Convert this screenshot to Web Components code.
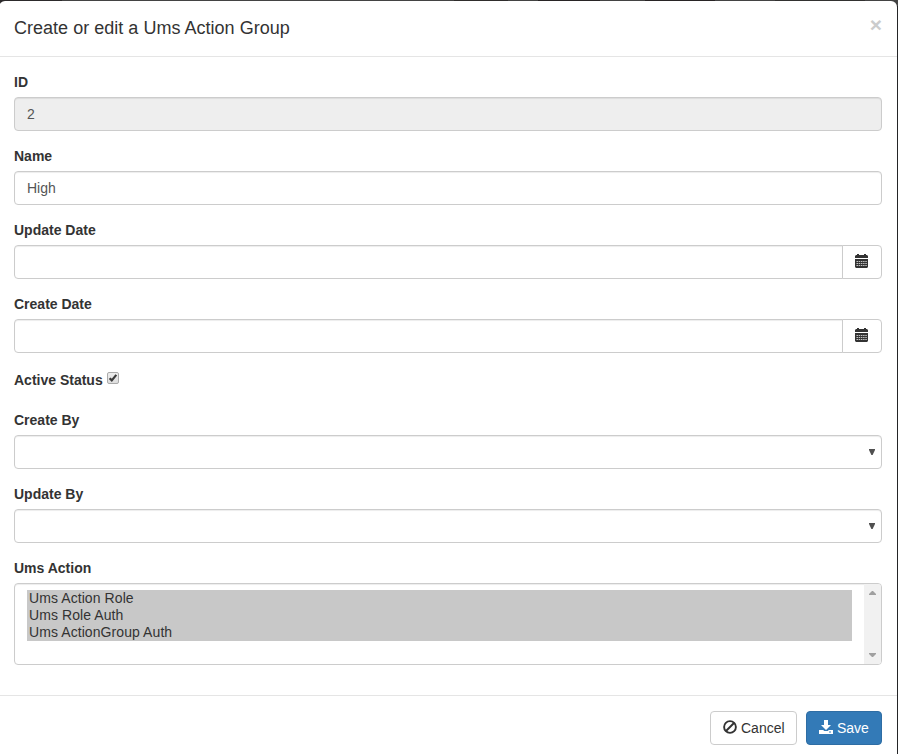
<!DOCTYPE html>
<html lang="en">
<head>
<meta charset="utf-8">
<title>Ums Action Group</title>
<style>
html,body{margin:0;height:100%;overflow:hidden}
body{background:#242527;font:14px/20px "Liberation Sans",Arial,sans-serif;color:#333}
</style>
</head>
<body>
<page-backdrop>
<modal-dialog>
  <span slot="title">Create or edit a Ums Action Group</span>
  <form-field label="ID"><text-box disabled>2</text-box></form-field>
  <form-field label="Name"><text-box>High</text-box></form-field>
  <form-field label="Update Date"><date-box></date-box></form-field>
  <form-field label="Create Date"><date-box></date-box></form-field>
  <check-field label="Active Status"></check-field>
  <form-field label="Create By"><select-box></select-box></form-field>
  <form-field label="Update By"><select-box></select-box></form-field>
  <form-field label="Ums Action">
    <multi-list><list-option>Ums Action Role</list-option><list-option>Ums Role Auth</list-option><list-option>Ums ActionGroup Auth</list-option></multi-list>
  </form-field>
  <action-button slot="footer" style="width:87px"><glyph-icon slot="icon" name="ban"></glyph-icon>Cancel</action-button>
  <action-button slot="footer" primary style="width:76px"><glyph-icon slot="icon" name="save"></glyph-icon>Save</action-button>
</modal-dialog>
</page-backdrop>
<script>
const define = (name, html) => customElements.define(name, class extends HTMLElement {
  constructor() {
    super();
    const t = document.createElement('template');
    t.innerHTML = '<style>*{box-sizing:border-box}:host{box-sizing:border-box}</style>' + (typeof html === 'function' ? html(this) : html);
    this.attachShadow({mode: 'open'}).append(t.content.cloneNode(true));
  }
});

define('page-backdrop', `<style>
:host{display:block;height:754px;padding:1px 1px 0 0;overflow:hidden;
background:linear-gradient(90deg,#2c2a2b 0 62px,#434343 62px 454px,#2f2d2c 454px 508px,#434343 508px 538px,#282425 538px 600px,#434343 600px 645px,#282425 645px 715px,#434343 715px 775px,#323130 775px 865px,#434343 865px) 0 0/100% 6px no-repeat,#242527}
</style><slot></slot>`);

define('modal-dialog', `<style>
:host{display:block;margin-left:-1px;height:760px;background:#fff;border-radius:6px 6px 0 0}
header{display:flex;justify-content:space-between;height:56px;padding:14px 15px 0;border-bottom:1px solid #e5e5e5}
h4{margin:0;font-size:18px;font-weight:400;line-height:26px;letter-spacing:.02px}
.close{font:bold 21px/21px "Liberation Sans",Arial,sans-serif;color:#ccc;margin-top:-1px}
main{padding:15px}
footer{display:flex;justify-content:flex-end;gap:9px;padding:15px;border-top:1px solid #e5e5e5}
</style>
<header><h4><slot name="title"></slot></h4><span class="close">×</span></header>
<main><slot></slot></main><footer><slot name="footer"></slot></footer>`);

define('form-field', el => `<style>
:host{display:block;margin-bottom:15px}
label{display:block;height:20px;margin-bottom:5px;font-weight:700}
</style><label>${el.getAttribute('label')}</label><slot></slot>`);

const box = 'border:1px solid #ccc;border-radius:4px;box-shadow:inset 0 1px 1px rgba(0,0,0,.075);background:#fff;';

define('text-box', `<style>
:host{display:block;height:34px;padding:6px 12px;color:#555;${box}}
:host([disabled]){background:#eee}
</style><slot></slot>`);

define('date-box', `<style>
:host{display:flex;height:34px}
.field{flex:1;${box}border-radius:4px 0 0 4px}
.pick{width:40px;margin-left:-1px;border:1px solid #ccc;border-radius:0 4px 4px 0;display:flex;padding:8px 0 0 12px;background:#fff}
</style><div class="field"></div><div class="pick"><glyph-icon name="calendar"></glyph-icon></div>`);

define('check-field', el => `<style>
:host{display:flex;height:27px;margin-bottom:15px;padding-top:2px}
label{font-weight:700;width:93px;white-space:nowrap}
svg{display:block;margin-top:2px}
</style><label>${el.getAttribute('label')}</label>
<svg width="12" height="12" viewBox="0 0 12 12"><defs><linearGradient id="g" x2="0" y2="1"><stop stop-color="#eee"/><stop offset="1" stop-color="#ddd"/></linearGradient></defs><rect x=".5" y=".5" width="11" height="11" rx="1.5" fill="url(#g)" stroke="#aaa"/><path d="M2.6 6.2 4.8 8.4 9.3 2.9" fill="none" stroke="#3b3b3b" stroke-width="2.2"/></svg>`);

define('select-box', `<style>
:host{display:flex;justify-content:flex-end;height:34px;padding:13px 6px 0;${box}}
svg{display:block}
</style><svg width="6" height="6" viewBox="0 0 6 6"><path d="M0 0H6V1L3.6 6H2.4L0 1Z" fill="#505050"/></svg>`);

define('multi-list', `<style>
:host{display:flex;justify-content:space-between;height:82px;overflow:hidden;${box}}
.items{flex:1;padding:6px 12px 0}
.bar{width:17px;background:#f1f1f1;display:flex;flex-direction:column;justify-content:space-between;align-items:center;padding:7px 0}
svg{display:block}
</style><div class="items"><slot></slot></div>
<div class="bar"><svg width="7" height="4" viewBox="0 0 7 4"><path d="M0 4V3L3 0H4L7 3V4Z" fill="#a0a0a0"/></svg><svg width="7" height="4" viewBox="0 0 7 4"><path d="M0 0V1L3 4H4L7 1V0Z" fill="#a0a0a0"/></svg></div>`);

define('list-option', `<style>:host{display:block;height:17px;line-height:17px;padding:0 2px;background:#c8c8c8;color:#333;letter-spacing:.08px}</style><slot></slot>`);

define('action-button', `<style>
:host{display:flex;height:34px;padding:6px 12px;gap:4px;border:1px solid #ccc;border-radius:4px;background:#fff;color:#333;white-space:nowrap}
:host([primary]){background:#337ab7;border-color:#2e6da4;color:#fff}
</style><slot name="icon"></slot><slot></slot>`);

const glyphs = {
  calendar: '<path d="M1 1H2V0H4V1H9V0H11V1H12L13 2V4H0V2ZM0 5H13V13L12 14H1L0 13Z" fill="currentColor"/><path d="M1.5 7.5H12M1.5 9.5H12M1.5 11.5H12" stroke="#fff" stroke-dasharray="1.5 .7" opacity=".7"/>',
  ban: '<circle cx="7" cy="7" r="5.9" fill="none" stroke="currentColor" stroke-width="1.9"/><path d="M3 11 11 3" stroke="currentColor" stroke-width="2"/>',
  save: '<path d="M5 0H9V5H12L7 10 2 5H5ZM0 10H4.2L5.2 11H8.8L9.8 10H14V14H0ZM10 11.5V12.5H12V11.5Z" fill="currentColor" fill-rule="evenodd"/>'
};
define('glyph-icon', el => `<style>:host{display:block;width:14px;height:14px;margin-top:2px;flex:none}:host([name=calendar]){margin-top:0}svg{display:block}</style>
<svg width="14" height="14" viewBox="0 0 14 14">${glyphs[el.getAttribute('name')]}</svg>`);
</script>
</body>
</html>
